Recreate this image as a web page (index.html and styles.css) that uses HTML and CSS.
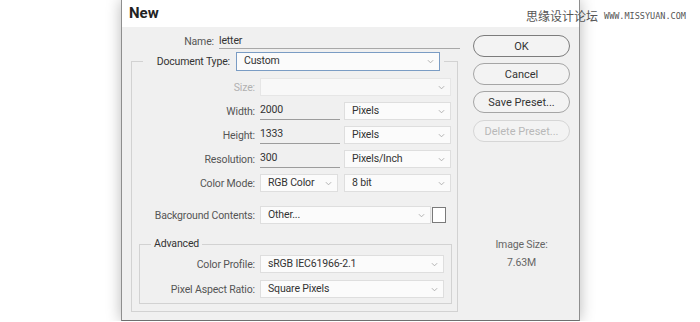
FILE: index.html
```html
<!DOCTYPE html>
<html lang="en">
<head>
  <meta charset="UTF-8">
  <title>New</title>
  <link rel="stylesheet" href="styles.css">
</head>
<body>
<div class="dialog">
  <div class="titlebar">New</div>
  <div class="watermark"><span class="wm-cn">思缘设计论坛</span><span class="wm-en">WWW.MISSYUAN.COM</span></div>
  <div class="content">
    <div class="main">
      <div class="name-row">
        <span class="name-label">Name:</span>
        <span class="name-field">letter</span>
      </div>
      <fieldset class="preset">
        <legend class="preset-legend">
          <span class="legend-label">Document Type:</span>
          <span class="select select-focus select-doc">Custom<svg class="chev" viewBox="0 0 8 5"><polyline points="1,1 4,4 7,1"/></svg></span>
        </legend>
        <div class="row row-first">
          <span class="lbl lbl-disabled">Size:</span>
          <span class="select select-disabled select-full"><svg class="chev" viewBox="0 0 8 5"><polyline points="1,1 4,4 7,1"/></svg></span>
        </div>
        <div class="row">
          <span class="lbl">Width:</span>
          <span class="num">2000</span>
          <span class="select select-unit">Pixels<svg class="chev" viewBox="0 0 8 5"><polyline points="1,1 4,4 7,1"/></svg></span>
        </div>
        <div class="row">
          <span class="lbl">Height:</span>
          <span class="num">1333</span>
          <span class="select select-unit">Pixels<svg class="chev" viewBox="0 0 8 5"><polyline points="1,1 4,4 7,1"/></svg></span>
        </div>
        <div class="row">
          <span class="lbl">Resolution:</span>
          <span class="num">300</span>
          <span class="select select-unit">Pixels/Inch<svg class="chev" viewBox="0 0 8 5"><polyline points="1,1 4,4 7,1"/></svg></span>
        </div>
        <div class="row">
          <span class="lbl">Color Mode:</span>
          <span class="select select-mode">RGB Color<svg class="chev" viewBox="0 0 8 5"><polyline points="1,1 4,4 7,1"/></svg></span>
          <span class="select select-unit">8 bit<svg class="chev" viewBox="0 0 8 5"><polyline points="1,1 4,4 7,1"/></svg></span>
        </div>
        <div class="row row-bg">
          <span class="lbl">Background Contents:</span>
          <span class="select select-bg">Other...<svg class="chev" viewBox="0 0 8 5"><polyline points="1,1 4,4 7,1"/></svg></span>
          <span class="swatch"></span>
        </div>
        <fieldset class="advanced">
          <legend class="adv-legend">Advanced</legend>
          <div class="row row-adv">
            <span class="lbl lbl-adv">Color Profile:</span>
            <span class="select select-adv">sRGB IEC61966-2.1<svg class="chev" viewBox="0 0 8 5"><polyline points="1,1 4,4 7,1"/></svg></span>
          </div>
          <div class="row row-adv row-adv2">
            <span class="lbl lbl-adv">Pixel Aspect Ratio:</span>
            <span class="select select-adv">Square Pixels<svg class="chev" viewBox="0 0 8 5"><polyline points="1,1 4,4 7,1"/></svg></span>
          </div>
        </fieldset>
      </fieldset>
    </div>
    <div class="side">
      <button type="button" class="btn btn-default">OK</button>
      <button type="button" class="btn">Cancel</button>
      <button type="button" class="btn">Save Preset...</button>
      <button type="button" class="btn btn-disabled">Delete Preset...</button>
      <div class="size-info">
        <div class="size-title">Image Size:</div>
        <div class="size-value">7.63M</div>
      </div>
    </div>
  </div>
</div>
</body>
</html>
```

FILE: styles.css
```css
* {
  box-sizing: border-box;
  font-family: Roboto, sans-serif;
}
body {
  margin: 0;
  background: #fff;
  position: relative;
  overflow: hidden;
}
.dialog {
  margin-left: 121px;
  width: 459px;
  height: 321px;
  background: #f0f0f0;
  border: 1px solid #8e8e8e;
  border-top: none;
  border-bottom-color: #6f6f6f;
  box-shadow: 0 0 14px rgba(0, 0, 0, 0.28);
  font-size: 10.5px;
  letter-spacing: -0.15px;
}
.titlebar {
  height: 27px;
  background: #fff;
  padding: 4px 0 0 7px;
  font-size: 15px;
  font-weight: bold;
  letter-spacing: 0;
  color: #222;
}
.watermark {
  position: absolute;
  top: 7px;
  left: 526px;
  display: flex;
  align-items: center;
  white-space: nowrap;
  letter-spacing: 0;
}
.wm-cn {
  font-family: "Noto Sans CJK SC", sans-serif;
  font-size: 12px;
  color: #555;
}
.wm-en {
  font-family: "DejaVu Sans Mono", monospace;
  font-size: 8.5px;
  color: #555;
  margin-left: 6px;
}
.content {
  display: flex;
}
.main {
  width: 343px;
  padding-top: 6px;
}
.name-row {
  display: flex;
  height: 16px;
  align-items: center;
}
.name-label {
  width: 92px;
  text-align: right;
  color: #555;
}
.name-field {
  margin-left: 5px;
  width: 241px;
  height: 16px;
  line-height: 15px;
  color: #333;
  border-bottom: 1px solid #a8a8a8;
}
.preset {
  margin: 3px 0 0 9px;
  width: 327px;
  height: 260px;
  padding: 0;
  border: 1px solid #d2d2d2;
}
.preset-legend {
  margin-left: 11px;
  padding: 0 4px 0 12px;
  display: flex;
  align-items: center;
  height: 19px;
}
.legend-label {
  width: 75px;
  text-align: right;
  color: #333;
  margin-right: 6px;
}
.row {
  display: flex;
  align-items: center;
  height: 18px;
  margin-top: 6px;
}
.row-first {
  margin-top: 7px;
}
.row-bg {
  margin-top: 14px;
}
.lbl {
  width: 123px;
  text-align: right;
  color: #555;
  margin-right: 5px;
}
.lbl-disabled {
  color: #b0b0b0;
}
.select {
  position: relative;
  height: 18px;
  line-height: 16px;
  padding-left: 7px;
  background: #fbfbfb;
  border: 1px solid #dedede;
  color: #333;
}
.select-focus {
  border-color: #7a9cc4;
  width: 204px;
  height: 19px;
}
.select-disabled {
  background: #f8f8f8;
  border-color: #e6e6e6;
}
.select-full {
  width: 191px;
}
.num {
  width: 80px;
  height: 18px;
  line-height: 16px;
  color: #333;
  border-bottom: 1px solid #9c9c9c;
  margin-right: 4px;
}
.select-unit {
  width: 107px;
}
.select-mode {
  width: 78px;
  margin-right: 6px;
}
.select-bg {
  width: 171px;
}
.swatch {
  width: 14px;
  height: 16px;
  margin-left: 1px;
  background: #fff;
  border: 1px solid #7a7a7a;
}
.chev {
  position: absolute;
  right: 5px;
  top: 6px;
  width: 7px;
  height: 5px;
  fill: none;
  stroke: #a8a8a8;
  stroke-width: 1;
}
.advanced {
  margin: 13px 0 0 7px;
  width: 313px;
  padding: 0 0 5px 0;
  border: 1px solid #d2d2d2;
}
.adv-legend {
  margin-left: 11px;
  padding: 0 3px;
  color: #333;
  height: 14px;
  line-height: 14px;
}
.row-adv {
  margin-top: 4px;
}
.row-adv2 {
  margin-top: 7px;
}
.lbl-adv {
  width: 115px;
}
.select-adv {
  width: 184px;
}
.side {
  padding: 8px 0 0 8px;
  display: flex;
  flex-direction: column;
}
.btn {
  width: 97px;
  height: 22px;
  margin-bottom: 6px;
  border: 1px solid #a5a5a5;
  border-radius: 11px;
  background: #f3f3f3;
  color: #333;
  font-size: 11px;
  padding: 0;
}
.btn-default {
  border-color: #7c7c7c;
}
.btn-disabled {
  border-color: #d6d6d6;
  color: #b8b8b8;
  margin-top: 1px;
}
.size-info {
  margin-top: 90px;
  width: 97px;
  text-align: center;
  color: #666;
}
.size-value {
  margin-top: 5px;
}
```
